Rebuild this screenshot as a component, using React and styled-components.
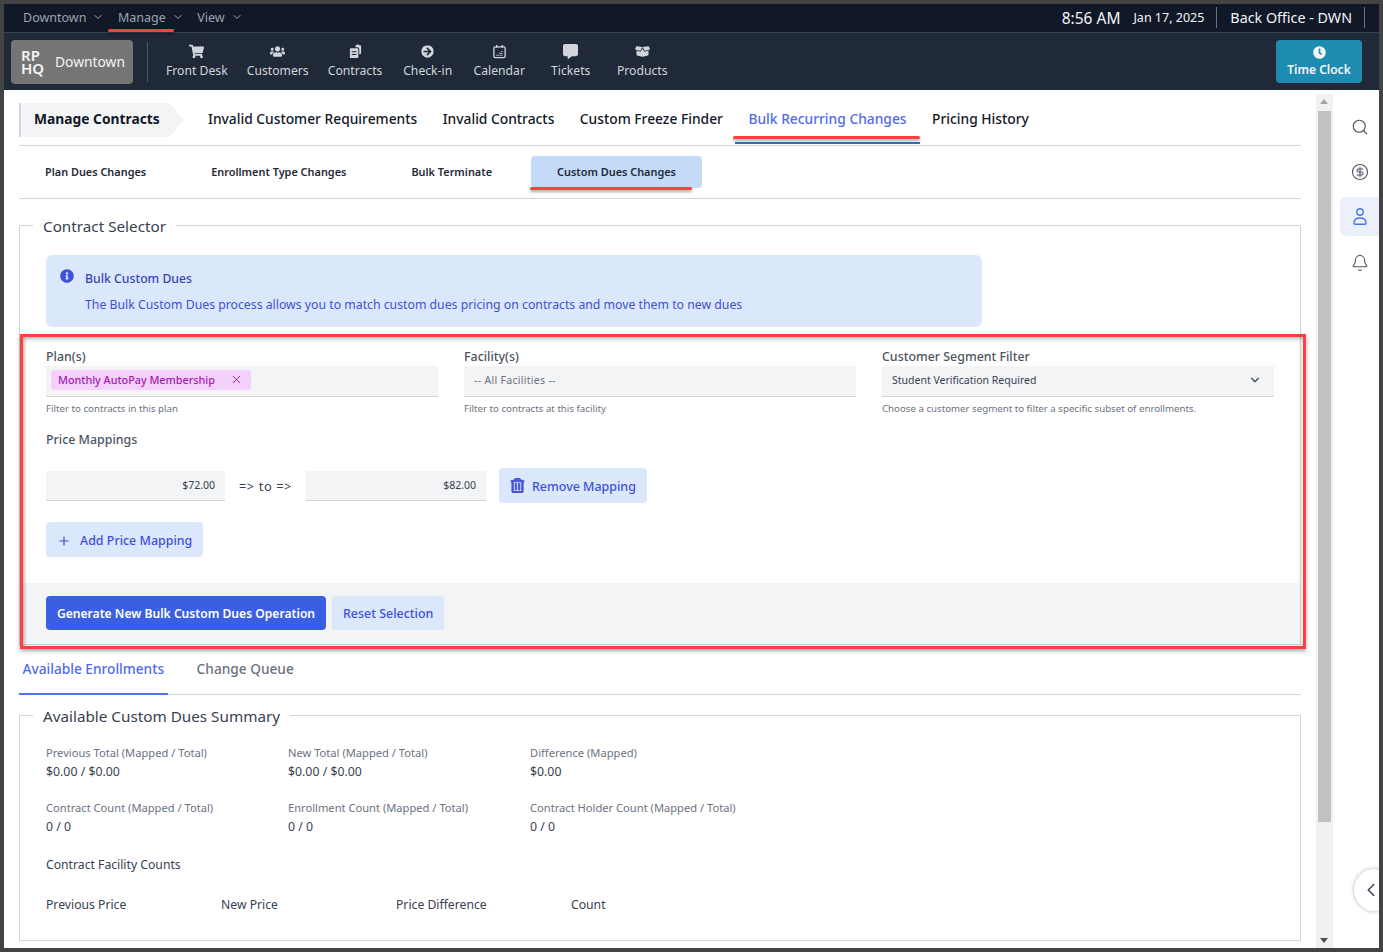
import React from 'react';
import styled, { createGlobalStyle } from 'styled-components';
import { FaShoppingCart, FaUsers, FaArrowCircleRight, FaCommentAlt, FaBoxOpen, FaClock, FaInfoCircle, FaRegTrashAlt } from 'react-icons/fa';
import { Search, CircleDollarSign, Bell, ChevronDown, ChevronLeft, Plus, X } from 'lucide-react';

const GlobalStyle = createGlobalStyle`
  * { box-sizing: border-box; }
  html, body { margin: 0; padding: 0; height: 952px; overflow: hidden; }
  body { font-family: "Noto Sans", "Liberation Sans", sans-serif; color: #111827; background: #434343; }
`;

const Frame = styled.div`
  position: relative;
  width: 1383px;
  height: 952px;
  padding: 4px;
  background: #434343;
  overflow: hidden;
`;

const TopBar = styled.div`
  display: flex;
  align-items: center;
  justify-content: space-between;
  height: 29px;
  padding: 0 14px 2px 19px;
  background: #111827;
  border-bottom: 1px solid #374151;
`;

const TopMenu = styled.div`
  display: flex;
  align-items: center;
  gap: 13.5px;
`;

const TopMenuItem = styled.span`
  display: flex;
  align-items: center;
  gap: 6px;
  font-size: 12.5px;
  color: #9ca3af;
`;

const TopRight = styled.div`
  display: flex;
  align-items: center;
  color: #f3f4f6;
`;

const Clock = styled.span`
  font-size: 15.5px;
  padding-top: 1px;
  margin-right: 13px;
`;

const DateText = styled.span`
  font-size: 12.5px;
  padding-right: 12px;
  border-right: 1px solid #6b7280;
  line-height: 21px;
`;

const Location = styled.span`
  font-size: 14.3px;
  padding: 0 12px 0 13px;
  border-right: 1px solid #6b7280;
  line-height: 21px;
`;

const NavBar = styled.div`
  display: flex;
  align-items: center;
  height: 57px;
  padding: 0 17px 0 7px;
  background: #1f2937;
`;

const Brand = styled.div`
  display: flex;
  align-items: center;
  gap: 9px;
  width: 122px;
  height: 44px;
  padding-left: 10px;
  border-radius: 4px;
  background: #757575;
  color: #f3f4f6;
  font-size: 13.8px;
`;

const BrandMark = styled.span`
  font-size: 15px;
  font-weight: 600;
  line-height: 13px;
  width: 25px;
`;

const NavDivider = styled.div`
  width: 1px;
  height: 40px;
  margin: 0 18px 0 14px;
  background: #4b5563;
`;

const NavItems = styled.div`
  display: flex;
  flex: 1;
  gap: 19px;
`;

const NavItem = styled.div`
  display: flex;
  flex-direction: column;
  align-items: center;
  min-width: 52.5px;
  gap: 4px;
  font-size: 12.2px;
  line-height: 16px;
  color: #d1d5db;
  svg { height: 15px; width: 15px; }
`;

const TimeClock = styled.button`
  display: flex;
  flex-direction: column;
  align-items: center;
  justify-content: center;
  gap: 3px;
  width: 86px;
  height: 43px;
  border: 0;
  border-radius: 4px;
  background: #1e8cb0;
  color: #f3f4f6;
  font: 600 12px/15px "Noto Sans", sans-serif;
`;

const Body = styled.div`
  display: flex;
  height: 858px;
  background: #fff;
  overflow: hidden;
`;

const Main = styled.main`
  flex: 1;
  min-width: 0;
  padding: 13px 15px 0;
`;

const TabRow = styled.div`
  display: flex;
  align-items: flex-start;
  height: 43px;
  border-bottom: 1px solid #d1d5db;
`;

const Crumb = styled.div`
  display: flex;
  align-items: center;
  width: 165px;
  height: 34px;
  padding: 0 0 3px 13px;
  margin-right: 24px;
  background: #f3f4f6;
  border-left: 2px solid #d1d5db;
  clip-path: polygon(0 0, 150px 0, 100% 50%, 150px 100%, 0 100%);
  font-size: 13.8px;
  font-weight: 700;
  color: #111827;
`;

const PageTabs = styled.div`
  display: flex;
  gap: 25.5px;
`;

const PageTab = styled.div`
  position: relative;
  height: 42px;
  padding-top: 5px;
  font-size: 13.8px;
  line-height: 22px;
  font-weight: 500;
  color: ${p => (p.$active ? '#4f6bed' : '#111827')};
  ${p => p.$active && `
    &::after {
      content: '';
      position: absolute;
      left: -13px;
      right: -13px;
      bottom: 1px;
      height: 2px;
      background: #3f68b5;
    }
  `}
`;

const SubRow = styled.div`
  display: flex;
  gap: 13px;
  height: 53px;
  padding-top: 10px;
  border-bottom: 1px solid #d1d5db;
`;

const SubTab = styled.div`
  height: 32px;
  padding: 0 26px;
  border-radius: 4px;
  font-size: 10.9px;
  line-height: 32px;
  font-weight: 600;
  color: #1f2937;
  background: ${p => (p.$active ? '#c3daf9' : 'transparent')};
`;

const Fieldset = styled.fieldset`
  margin: ${p => p.$top}px 0 0;
  padding: 0;
  height: ${p => p.$height}px;
  border: 1px solid #d1d5db;
  min-width: 0;
`;

const Legend = styled.legend`
  margin-left: 13px;
  padding: 2px 10px 0;
  font-size: 15.25px;
  line-height: 22px;
  color: #374151;
`;

const Padded = styled.div`
  padding: 18px 26px 0;
`;

const Alert = styled.div`
  display: flex;
  gap: 11px;
  width: 936px;
  height: 72px;
  padding: 14px 14px 0;
  border-radius: 6px;
  background: #dbe7fb;
  color: #3f51d9;
  svg { flex: none; }
`;

const AlertTitle = styled.div`
  font-size: 12.25px;
  line-height: 20px;
  font-weight: 500;
  color: #3a45b0;
`;

const AlertText = styled.div`
  margin-top: 6px;
  font-size: 12.27px;
  line-height: 20px;
`;

const FilterGrid = styled.div`
  display: grid;
  grid-template-columns: repeat(3, 392px);
  gap: 26px;
  margin-top: 21px;
`;

const Label = styled.div`
  font-size: 12.4px;
  line-height: 18px;
  font-weight: 500;
  color: #4b5563;
`;

const SelectBox = styled.div`
  display: flex;
  align-items: center;
  justify-content: space-between;
  height: 31px;
  padding: 0 12px 3px 10px;
  background: #f3f4f6;
  border-bottom: 1px solid #d1d5db;
  font-size: 10.5px;
  letter-spacing: ${p => (p.$muted ? '0.3px' : '0')};
  color: ${p => (p.$muted ? '#6b7280' : '#374151')};
`;

const Chip = styled.span`
  display: flex;
  align-items: center;
  justify-content: space-between;
  width: 200px;
  height: 20px;
  padding: 0 8px 0 7px;
  margin-left: -5px;
  border-radius: 3px;
  background: #f5d0fa;
  color: #a21caf;
  font-size: 10.8px;
  font-weight: 500;
`;

const HelpText = styled.div`
  margin-top: 6px;
  font-size: 9.7px;
  line-height: 12px;
  color: #6b7280;
`;

const Mappings = styled.div`
  margin-top: 16px;
`;

const MappingRow = styled.div`
  display: flex;
  align-items: center;
  margin-top: 19px;
`;

const PriceInput = styled.div`
  width: ${p => p.$width}px;
  height: 30px;
  padding-right: 10px;
  background: #f3f4f6;
  border-bottom: 1px solid #d1d5db;
  font-size: 10.5px;
  line-height: 28px;
  text-align: right;
  color: #374151;
`;

const Arrow = styled.span`
  width: 81px;
  text-align: center;
  font-size: 12.8px;
  letter-spacing: 0.6px;
  color: #374151;
`;

const SoftButton = styled.button`
  display: inline-flex;
  align-items: center;
  gap: ${p => p.$gap || 9}px;
  height: ${p => p.$h || 35}px;
  padding: ${p => (p.$h ? 0 : 2)}px 11px 0;
  margin-left: ${p => p.$left || 0}px;
  margin-top: ${p => p.$top || 0}px;
  border: 0;
  border-radius: 4px;
  background: #dbe7fb;
  color: #3f51d9;
  font: 500 12.45px "Noto Sans", sans-serif;
`;

const TrashIcon = styled(FaRegTrashAlt)`
  stroke: currentColor;
  stroke-width: 28px;
  margin-top: -3px;
`;

const Footer = styled.div`
  display: flex;
  align-items: flex-start;
  gap: 6px;
  height: 60px;
  margin-top: 26px;
  padding: 13px 26px 0;
  background: #f3f4f6;
`;

const PrimaryButton = styled.button`
  width: 280px;
  height: 34px;
  padding: 0;
  border: 0;
  border-radius: 4px;
  background: #3b5fe2;
  color: #fff;
  font: 600 12.12px "Noto Sans", sans-serif;
`;

const ViewTabs = styled.div`
  display: flex;
  height: 50px;
  border-bottom: 1px solid #d1d5db;
`;

const ViewTab = styled.div`
  height: 50px;
  padding: 13px ${p => (p.$active ? 3.5 : 0)}px 0;
  margin-right: ${p => (p.$active ? 29 : 0)}px;
  border-bottom: ${p => (p.$active ? '2px solid #4f74e8' : '0')};
  font-size: 13.7px;
  line-height: 22px;
  font-weight: 500;
  color: ${p => (p.$active ? '#4f6bed' : '#6b7280')};
`;

const StatGrid = styled.div`
  display: grid;
  grid-template-columns: repeat(3, 242px);
  row-gap: 19px;
`;

const StatLabel = styled.div`
  font-size: 11.15px;
  line-height: 16px;
  color: #6b7280;
  white-space: nowrap;
`;

const StatValue = styled.div`
  margin-top: 2px;
  font-size: 12.3px;
  line-height: 18px;
  color: #374151;
`;

const CountsTitle = styled.div`
  margin-top: 20px;
  font-size: 12.2px;
  line-height: 18px;
  color: #374151;
`;

const CountsHead = styled.div`
  display: grid;
  grid-template-columns: repeat(4, 175px);
  margin-top: 22px;
  font-size: 12.2px;
  line-height: 18px;
  color: #374151;
`;

const ScrollTrack = styled.div`
  position: relative;
  flex: none;
  width: 17px;
  margin-top: 4px;
  background: #f1f1f1;
`;

const Thumb = styled.div`
  position: absolute;
  top: 17px;
  left: 2px;
  width: 13px;
  height: 711px;
  background: #c1c1c1;
`;

const ScrollArrow = styled.div`
  position: absolute;
  left: 4px;
  ${p => (p.$down ? 'bottom: 5px;' : 'top: 5px;')}
  width: 0;
  height: 0;
  border-left: 4px solid transparent;
  border-right: 4px solid transparent;
  ${p => (p.$down ? 'border-top: 5px solid #505050;' : 'border-bottom: 5px solid #a3a3a3;')}
`;

const Rail = styled.aside`
  flex: none;
  display: flex;
  flex-direction: column;
  align-items: flex-end;
  gap: 6px;
  width: 46px;
  padding-top: 17px;
`;

const RailButton = styled.div`
  display: flex;
  align-items: center;
  justify-content: center;
  width: 39px;
  height: 39px;
  padding-top: ${p => (p.$low ? 3 : 0)}px;
  border-radius: 6px 0 0 6px;
  background: ${p => (p.$active ? '#ebf0fb' : 'transparent')};
  color: ${p => (p.$active ? '#4f74e8' : '#4b5563')};
`;

// annotation marks drawn over the screenshot
const Underline = styled.div`
  position: absolute;
  left: ${p => p.$x}px;
  top: ${p => p.$y}px;
  width: ${p => p.$w}px;
  height: 3px;
  border-radius: 2px;
  background: #ff4040;
  box-shadow: 0 2px 3px rgba(0, 0, 0, 0.35);
`;

const RedBox = styled.div`
  position: absolute;
  left: 20px;
  top: 334px;
  width: 1286px;
  height: 315px;
  border: 3px solid #ff4040;
  box-shadow: 0 2px 4px rgba(0, 0, 0, 0.35), inset 0 2px 4px rgba(0, 0, 0, 0.25), inset 2px 0 3px rgba(0, 0, 0, 0.15);
  pointer-events: none;
`;

const Collapse = styled.div`
  position: absolute;
  left: 1354px;
  top: 869px;
  width: 40px;
  height: 42px;
  padding: 10px 0 0 6px;
  border-radius: 50%;
  background: #fff;
  box-shadow: 0 0 4px rgba(0, 0, 0, 0.3);
  color: #374151;
`;

const EdgeCover = styled.div`
  position: absolute;
  top: 0;
  right: 0;
  width: 4px;
  height: 952px;
  background: #434343;
`;

const CheckInIcon = styled(FaArrowCircleRight)`
  transform: scale(0.85);
`;

const ContractsIcon = () => (
  <svg viewBox="0 0 16 16" fill="currentColor">
    <path d="M9.5 1.2a1 1 0 0 1 2 0h1.2a1.3 1.3 0 0 1 1.3 1.3v7.2a1.3 1.3 0 0 1-1.3 1.3h-.7V5.4A2 2 0 0 0 10 3.4H7.9V2.5a1.3 1.3 0 0 1 1.6-1.3z" />
    <path d="M3 4.6h7a1 1 0 0 1 1 1V14a1 1 0 0 1-1 1H3a1 1 0 0 1-1-1V5.6a1 1 0 0 1 1-1zm1 3v1.1h5V7.6H4zm0 3v1.1h5v-1.1H4z" fillRule="evenodd" />
  </svg>
);

const CalendarIcon = () => (
  <svg viewBox="0 0 16 16" fill="none" stroke="currentColor" strokeWidth="1.4">
    <rect x="2" y="3" width="12" height="11.5" rx="1.5" />
    <path d="M5 1v3M11 1v3" />
    <path d="M4.5 12h7M8 10h3.5M10 8h1.5" strokeWidth="1.3" strokeDasharray="1.2 .6" />
  </svg>
);

const UserIcon = () => (
  <svg width="18" height="20" viewBox="0 0 18 20" fill="none" stroke="currentColor" strokeWidth="1.4">
    <circle cx="9" cy="5" r="3.2" />
    <path d="M3 16c0-3.4 2.6-5 6-5s6 1.6 6 5c0 .7-.4 1.2-1.1 1.2H4.100C3.400 17.200 3 16.700 3 16z" />
  </svg>
);

const navItems = [
  ['Front Desk', <FaShoppingCart />],
  ['Customers', <FaUsers />],
  ['Contracts', <ContractsIcon />],
  ['Check-in', <CheckInIcon />],
  ['Calendar', <CalendarIcon />],
  ['Tickets', <FaCommentAlt />],
  ['Products', <FaBoxOpen />],
];

const pageTabs = ['Invalid Customer Requirements', 'Invalid Contracts', 'Custom Freeze Finder', 'Bulk Recurring Changes', 'Pricing History'];
const subTabs = ['Plan Dues Changes', 'Enrollment Type Changes', 'Bulk Terminate', 'Custom Dues Changes'];

const stats = [
  ['Previous Total (Mapped / Total)', '$0.00 / $0.00'],
  ['New Total (Mapped / Total)', '$0.00 / $0.00'],
  ['Difference (Mapped)', '$0.00'],
  ['Contract Count (Mapped / Total)', '0 / 0'],
  ['Enrollment Count (Mapped / Total)', '0 / 0'],
  ['Contract Holder Count (Mapped / Total)', '0 / 0'],
];

export default function App() {
  return (
    <Frame>
      <GlobalStyle />
      <TopBar>
        <TopMenu>
          <TopMenuItem>Downtown <ChevronDown size={12} /></TopMenuItem>
          <TopMenuItem>Manage <ChevronDown size={12} /></TopMenuItem>
          <TopMenuItem>View <ChevronDown size={12} /></TopMenuItem>
        </TopMenu>
        <TopRight>
          <Clock>8:56 AM</Clock>
          <DateText>Jan 17, 2025</DateText>
          <Location>Back Office - DWN</Location>
        </TopRight>
      </TopBar>
      <NavBar>
        <Brand><BrandMark>RP HQ</BrandMark>Downtown</Brand>
        <NavDivider />
        <NavItems>
          {navItems.map(([name, icon]) => (
            <NavItem key={name}>{icon}{name}</NavItem>
          ))}
        </NavItems>
        <TimeClock><FaClock size={13} />Time Clock</TimeClock>
      </NavBar>
      <Body>
        <Main>
          <TabRow>
            <Crumb>Manage Contracts</Crumb>
            <PageTabs>
              {pageTabs.map(t => (
                <PageTab key={t} $active={t === 'Bulk Recurring Changes'}>{t}</PageTab>
              ))}
            </PageTabs>
          </TabRow>
          <SubRow>
            {subTabs.map(t => (
              <SubTab key={t} $active={t === 'Custom Dues Changes'}>{t}</SubTab>
            ))}
          </SubRow>
          <Fieldset $height={432} $top={14}>
            <Legend>Contract Selector</Legend>
            <Padded>
              <Alert>
                <FaInfoCircle size={14} />
                <div>
                  <AlertTitle>Bulk Custom Dues</AlertTitle>
                  <AlertText>The Bulk Custom Dues process allows you to match custom dues pricing on contracts and move them to new dues</AlertText>
                </div>
              </Alert>
              <FilterGrid>
                <div>
                  <Label>Plan(s)</Label>
                  <SelectBox>
                    <Chip>Monthly AutoPay Membership <X size={13} strokeWidth={1.8} /></Chip>
                  </SelectBox>
                  <HelpText>Filter to contracts in this plan</HelpText>
                </div>
                <div>
                  <Label>Facility(s)</Label>
                  <SelectBox $muted>-- All Facilities --</SelectBox>
                  <HelpText>Filter to contracts at this facility</HelpText>
                </div>
                <div>
                  <Label>Customer Segment Filter</Label>
                  <SelectBox>Student Verification Required <ChevronDown size={14} /></SelectBox>
                  <HelpText>Choose a customer segment to filter a specific subset of enrollments.</HelpText>
                </div>
              </FilterGrid>
              <Mappings>
                <Label>Price Mappings</Label>
                <MappingRow>
                  <PriceInput $width={179}>$72.00</PriceInput>
                  <Arrow>=&gt; to =&gt;</Arrow>
                  <PriceInput $width={180}>$82.00</PriceInput>
                  <SoftButton $left={13} $gap={7}><TrashIcon size={15} />Remove Mapping</SoftButton>
                </MappingRow>
                <SoftButton $top={19} $gap={9}><Plus size={14} />Add Price Mapping</SoftButton>
              </Mappings>
            </Padded>
            <Footer>
              <PrimaryButton>Generate New Bulk Custom Dues Operation</PrimaryButton>
              <SoftButton $h={34}>Reset Selection</SoftButton>
            </Footer>
          </Fieldset>
          <ViewTabs>
            <ViewTab $active>Available Enrollments</ViewTab>
            <ViewTab>Change Queue</ViewTab>
          </ViewTabs>
          <Fieldset $height={238} $top={8}>
            <Legend>Available Custom Dues Summary</Legend>
            <Padded>
              <StatGrid>
                {stats.map(([label, value]) => (
                  <div key={label}>
                    <StatLabel>{label}</StatLabel>
                    <StatValue>{value}</StatValue>
                  </div>
                ))}
              </StatGrid>
              <CountsTitle>Contract Facility Counts</CountsTitle>
              <CountsHead>
                <span>Previous Price</span>
                <span>New Price</span>
                <span>Price Difference</span>
                <span>Count</span>
              </CountsHead>
            </Padded>
          </Fieldset>
        </Main>
        <ScrollTrack>
          <ScrollArrow />
          <Thumb />
          <ScrollArrow $down />
        </ScrollTrack>
        <Rail>
          <RailButton><Search size={18} strokeWidth={1.5} /></RailButton>
          <RailButton><CircleDollarSign size={18} strokeWidth={1.5} /></RailButton>
          <RailButton $active><UserIcon /></RailButton>
          <RailButton $low><Bell size={18} strokeWidth={1.5} /></RailButton>
        </Rail>
      </Body>
      <Underline $x={108} $y={29} $w={66} />
      <Underline $x={733} $y={136} $w={187} />
      <Underline $x={530} $y={187} $w={162} />
      <RedBox />
      <Collapse><ChevronLeft size={22} strokeWidth={1.6} /></Collapse>
      <EdgeCover />
    </Frame>
  );
}
